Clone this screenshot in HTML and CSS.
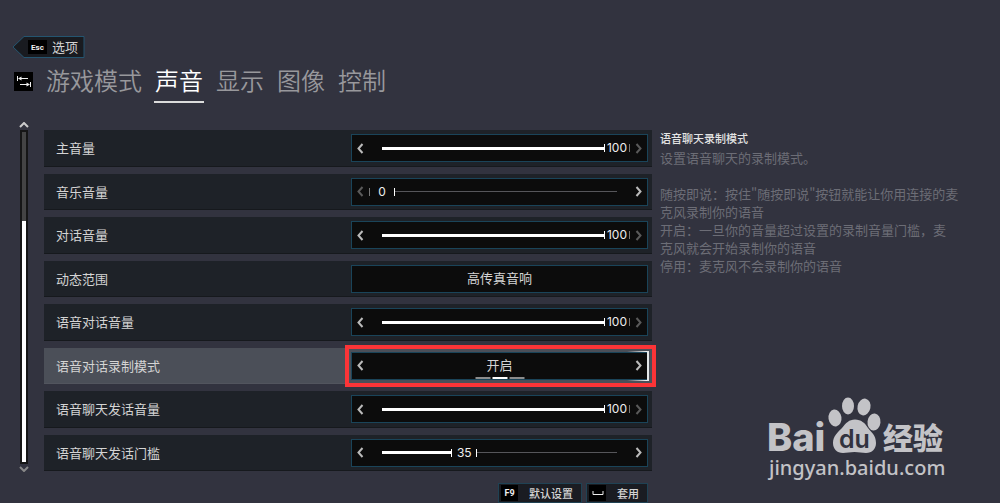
FILE: index.html
```html
<!DOCTYPE html>
<html lang="zh-CN">
<head>
    <meta charset="UTF-8">
    <meta name="viewport" content="width=device-width, initial-scale=1.0">
    <title>选项 - 声音</title>
    <link rel="stylesheet" href="styles.css">
</head>
<body>
    <header>
        <button class="back">
            <svg class="back-shape" width="73" height="24" viewBox="0 0 73 24">
                <path d="M1 12 L12 1.500 H72 V22.500 H12 Z"></path>
            </svg>
            <kbd>Esc</kbd>
            <span>选项</span>
        </button>
        <nav class="tabs">
            <svg class="tab-key" width="19" height="19" viewBox="0 0 19 19">
                <rect width="19" height="19" fill="#000"></rect>
                <path d="M3.500 4v5M5 6.500h9M16.500 10v5M6 12.500h9" fill="none" stroke="#f0f0f0"></path>
                <path d="M4 6.500l3.500-2v4zM16 12.500l-3.500-2v4z" fill="#f0f0f0"></path>
            </svg>
            <a href="#game">游戏模式</a>
            <a href="#sound" class="active">声音</a>
            <a href="#display">显示</a>
            <a href="#graphics">图像</a>
            <a href="#controls">控制</a>
        </nav>
    </header>

    <main>
        <div class="scrollbar">
            <svg class="scroll-up" width="10" height="6" viewBox="0 0 10 6"><path d="M1 5l4-4 4 4"></path></svg>
            <div class="scroll-track"><div class="scroll-thumb"></div></div>
            <svg class="scroll-down" width="10" height="6" viewBox="0 0 10 6"><path d="M1 1l4 4 4-4"></path></svg>
        </div>

        <div class="settings">
            <div class="row">
                <label for="master">主音量</label>
                <div class="control">
                    <button class="arrow" aria-label="减少"><svg width="7" height="11" viewBox="0 0 7 11"><path d="M5.500 1L1.500 5.500l4 4.500"></path></svg></button>
                    <div class="slider max">
                        <div class="fill" style="flex-grow: 100"></div>
                        <output for="master">100</output>
                        <div class="rest" style="flex-grow: 0"></div>
                        <input type="range" id="master" min="0" max="100" value="100">
                    </div>
                    <button class="arrow" aria-label="增加" disabled><svg width="7" height="11" viewBox="0 0 7 11"><path d="M1.500 1l4 4.500-4 4.500"></path></svg></button>
                </div>
            </div>
            <div class="row">
                <label for="music">音乐音量</label>
                <div class="control">
                    <button class="arrow" aria-label="减少" disabled><svg width="7" height="11" viewBox="0 0 7 11"><path d="M5.500 1L1.500 5.500l4 4.500"></path></svg></button>
                    <div class="slider min">
                        <div class="fill" style="flex-grow: 0"></div>
                        <output for="music">0</output>
                        <div class="rest" style="flex-grow: 100"></div>
                        <input type="range" id="music" min="0" max="100" value="0">
                    </div>
                    <button class="arrow" aria-label="增加"><svg width="7" height="11" viewBox="0 0 7 11"><path d="M1.500 1l4 4.500-4 4.500"></path></svg></button>
                </div>
            </div>
            <div class="row">
                <label for="dialogue">对话音量</label>
                <div class="control">
                    <button class="arrow" aria-label="减少"><svg width="7" height="11" viewBox="0 0 7 11"><path d="M5.500 1L1.500 5.500l4 4.500"></path></svg></button>
                    <div class="slider max">
                        <div class="fill" style="flex-grow: 100"></div>
                        <output for="dialogue">100</output>
                        <div class="rest" style="flex-grow: 0"></div>
                        <input type="range" id="dialogue" min="0" max="100" value="100">
                    </div>
                    <button class="arrow" aria-label="增加" disabled><svg width="7" height="11" viewBox="0 0 7 11"><path d="M1.500 1l4 4.500-4 4.500"></path></svg></button>
                </div>
            </div>
            <div class="row">
                <label for="range">动态范围</label>
                <button class="control value" id="range">高传真音响</button>
            </div>
            <div class="row">
                <label for="voice">语音对话音量</label>
                <div class="control">
                    <button class="arrow" aria-label="减少"><svg width="7" height="11" viewBox="0 0 7 11"><path d="M5.500 1L1.500 5.500l4 4.500"></path></svg></button>
                    <div class="slider max">
                        <div class="fill" style="flex-grow: 100"></div>
                        <output for="voice">100</output>
                        <div class="rest" style="flex-grow: 0"></div>
                        <input type="range" id="voice" min="0" max="100" value="100">
                    </div>
                    <button class="arrow" aria-label="增加" disabled><svg width="7" height="11" viewBox="0 0 7 11"><path d="M1.500 1l4 4.500-4 4.500"></path></svg></button>
                </div>
            </div>
            <div class="row selected">
                <label for="record">语音对话录制模式</label>
                <div class="control">
                    <button class="arrow" aria-label="上一个"><svg width="7" height="11" viewBox="0 0 7 11"><path d="M5.500 1L1.500 5.500l4 4.500"></path></svg></button>
                    <output class="value" id="record">开启</output>
                    <button class="arrow" aria-label="下一个"><svg width="7" height="11" viewBox="0 0 7 11"><path d="M1.500 1l4 4.500-4 4.500"></path></svg></button>
                    <div class="steps"><i></i><i class="on"></i><i></i></div>
                    <div class="bracket"></div>
                    <div class="marker"></div>
                </div>
            </div>
            <div class="row">
                <label for="mic">语音聊天发话音量</label>
                <div class="control">
                    <button class="arrow" aria-label="减少"><svg width="7" height="11" viewBox="0 0 7 11"><path d="M5.500 1L1.500 5.500l4 4.500"></path></svg></button>
                    <div class="slider max">
                        <div class="fill" style="flex-grow: 100"></div>
                        <output for="mic">100</output>
                        <div class="rest" style="flex-grow: 0"></div>
                        <input type="range" id="mic" min="0" max="100" value="100">
                    </div>
                    <button class="arrow" aria-label="增加" disabled><svg width="7" height="11" viewBox="0 0 7 11"><path d="M1.500 1l4 4.500-4 4.500"></path></svg></button>
                </div>
            </div>
            <div class="row">
                <label for="threshold">语音聊天发话门槛</label>
                <div class="control">
                    <button class="arrow" aria-label="减少"><svg width="7" height="11" viewBox="0 0 7 11"><path d="M5.500 1L1.500 5.500l4 4.500"></path></svg></button>
                    <div class="slider">
                        <div class="fill" style="flex-grow: 35"></div>
                        <output for="threshold">35</output>
                        <div class="rest" style="flex-grow: 65"></div>
                        <input type="range" id="threshold" min="0" max="100" value="35">
                    </div>
                    <button class="arrow" aria-label="增加"><svg width="7" height="11" viewBox="0 0 7 11"><path d="M1.500 1l4 4.500-4 4.500"></path></svg></button>
                </div>
            </div>
        </div>

        <aside>
            <h2>语音聊天录制模式</h2>
            <p>设置语音聊天的录制模式。</p>
            <p>随按即说：按住"随按即说"按钮就能让你用连接的麦<br>克风录制你的语音<br>开启：一旦你的音量超过设置的录制音量门槛，麦<br>克风就会开始录制你的语音<br>停用：麦克风不会录制你的语音</p>
        </aside>
    </main>

    <footer>
        <button><kbd>F9</kbd><span>默认设置</span></button>
        <button><kbd><svg width="12" height="5" viewBox="0 0 12 5"><path d="M1 0v3.500h10V0"></path></svg></kbd><span>套用</span></button>
    </footer>

    <svg class="watermark" width="190" height="90" viewBox="0 0 190 90">
        <text class="brand" x="5" y="53">Bai</text>
        <ellipse cx="73" cy="20" rx="6.500" ry="8.500" transform="rotate(-8 73 20)"></ellipse>
        <ellipse cx="86" cy="8" rx="6" ry="8.500"></ellipse>
        <ellipse cx="102" cy="9" rx="6.500" ry="8.500" transform="rotate(12 102 9)"></ellipse>
        <ellipse cx="112" cy="24" rx="6.500" ry="8.500" transform="rotate(6 112 24)"></ellipse>
        <path d="M93 21.500C99 21.500 103 25 106 30C109 34 114 37 114 45C114 51 110 55 104 55C100 55 97 54 92.500 54C88 54 85 55 81 55C75 55 71 51 71 45C71 38 76 34 80 30C84 25 87 21.500 93 21.500Z"></path>
        <text class="du" x="77" y="50">du</text>
        <text class="cn" x="121" y="51">经验</text>
        <text class="site" x="7" y="77">jingyan.baidu.com</text>
    </svg>
</body>
</html>
```

FILE: styles.css
```css
* {
    box-sizing: border-box;
}
body {
    display: flex;
    flex-direction: column;
    position: relative;
    min-height: 100vh;
    margin: 0;
    padding: 35px 0 0 12px;
    background-color: #32333f;
    color: #d4d4d4;
    font-family: "Noto Sans CJK SC", sans-serif;
    font-size: 13px;
}
button {
    margin: 0;
    padding: 0;
    border: none;
    background: none;
    color: inherit;
    font: inherit;
    cursor: pointer;
}
kbd {
    display: flex;
    align-items: center;
    justify-content: center;
    background-color: #000;
    color: #eee;
    font-family: Roboto, sans-serif;
    font-weight: bold;
}

/* header */
.back {
    display: flex;
    align-items: center;
    position: relative;
    gap: 5px;
    width: 73px;
    height: 24px;
    padding-left: 16px;
}
.back-shape {
    position: absolute;
    left: 0;
    top: 0;
    fill: #191b20;
    stroke: #245570;
}
.back kbd {
    position: relative;
    width: 19px;
    height: 14px;
    font-size: 8px;
}
.back span {
    position: relative;
    line-height: 20px;
}
.tabs {
    display: flex;
    gap: 11px;
    margin-left: 2px;
}
.tab-key {
    margin: 13px 1px 0 0;
}
.tabs a {
    height: 44px;
    padding: 0 1px;
    border-bottom: 2px solid transparent;
    color: #98989c;
    font-size: 24px;
    font-weight: 350;
    line-height: 42px;
    text-decoration: none;
}
.tabs a.active {
    border-color: #dcdcdc;
    color: #fff;
}

/* settings list */
main {
    display: flex;
    flex: 1;
    margin-top: 27px;
    padding-left: 8px;
}
.scrollbar {
    display: flex;
    position: relative;
    width: 8px;
    margin: 0 16px 7px 0;
    padding: 2px;
    background-color: #161616;
}
.scrollbar svg {
    position: absolute;
    left: -1px;
    fill: none;
    stroke: #ccc;
    stroke-width: 2;
}
.scroll-up {
    top: -8px;
}
.scrollbar .scroll-down {
    bottom: -8px;
    stroke: #888;
}
.scroll-track {
    display: flex;
    flex: 1;
    align-items: flex-end;
    background-color: #444;
}
.scroll-thumb {
    width: 100%;
    height: 73%;
    background-color: #fff;
}
.settings {
    display: grid;
    flex: 1;
    grid-auto-rows: 1fr;
    gap: 7px;
}
.row {
    display: flex;
    align-items: center;
    padding: 4px 4px 3px 12px;
    border-bottom: 1px solid #16191d;
    background-color: #1e2228;
}
.row label {
    flex: 1;
    line-height: 20px;
}
.row.selected {
    border-color: #52555e;
    background-color: #4b4f58;
}
.control {
    display: flex;
    align-items: center;
    position: relative;
    width: 297px;
    height: 28px;
    border: 1px solid #1a4459;
    background-color: #0c0c0c;
}
.value {
    flex: 1;
    padding-bottom: 2px;
    text-align: center;
}
button.value {
    display: block;
    flex: none;
}
.arrow {
    display: flex;
    align-items: center;
    justify-content: center;
    width: 17px;
    height: 26px;
}
.arrow svg {
    fill: none;
    stroke: #bbb;
    stroke-width: 2;
}
.arrow:disabled svg {
    stroke: #5a5a5a;
}

/* slider: the number sits between two ticks and the line stops around it */
.slider {
    display: flex;
    flex: 1;
    align-items: center;
    position: relative;
    height: 26px;
}
.fill,
.rest {
    flex-basis: 0;
    position: relative;
    height: 3px;
}
.fill::before,
.rest::before {
    content: "";
    position: absolute;
    top: 0;
    left: 13px;
    right: 0;
    height: 3px;
    background-color: #fff;
}
.rest::before {
    top: 1px;
    left: 0;
    right: 13px;
    height: 1px;
    background-color: #56565a;
}
.slider output {
    width: 26px;
    height: 8px;
    border: solid #fff;
    border-width: 0 1px;
    color: #eee;
    font-family: Inter, sans-serif;
    font-size: 12px;
    line-height: 8px;
    text-align: center;
}
.slider.max output {
    border-right-color: #777;
}
.slider.min output {
    border-left-color: #777;
}
.slider input {
    position: absolute;
    inset: 0;
    width: 100%;
    height: 100%;
    margin: 0;
    opacity: 0;
    cursor: pointer;
}

/* selected row */
.steps {
    display: flex;
    gap: 2px;
    position: absolute;
    bottom: 0;
    left: 50%;
    transform: translateX(-50%);
}
.steps i {
    width: 15px;
    height: 2px;
    background-color: #8c8c8c;
}
.steps .on {
    background-color: #fff;
}
.bracket {
    position: absolute;
    top: -2px;
    bottom: -2px;
    right: -2px;
    width: 22px;
    border-right: 2px solid #e4e8ea;
    background:
        linear-gradient(to right, transparent, #f4f4f4) top / 100% 1px no-repeat,
        linear-gradient(to right, transparent, #f4f4f4) bottom / 100% 1px no-repeat;
    pointer-events: none;
}
.marker {
    position: absolute;
    inset: -8px -9px -8px -7px;
    border: 4px solid #fb3437;
    pointer-events: none;
}

/* description */
aside {
    width: 340px;
    margin-left: 8px;
    color: #6c6d76;
    line-height: 18px;
}
h2 {
    margin: 0 0 2px;
    color: #e4e4e4;
    font-size: 11px;
    font-weight: 500;
    line-height: 17px;
}
p {
    margin: 0 0 18px;
}

/* footer */
footer {
    display: flex;
    justify-content: flex-end;
    gap: 4px;
    margin-top: 12px;
    padding-right: 352px;
}
footer button {
    display: flex;
    align-items: center;
    gap: 11px;
    height: 20px;
    padding: 0 8px 0 2px;
    border: 1px solid #1f4254;
    background-color: #1a1c22;
    font-size: 11px;
    font-weight: 500;
    line-height: 16px;
}
footer kbd {
    width: 17px;
    height: 16px;
    font-size: 9px;
}
footer kbd svg {
    fill: none;
    stroke: #eee;
}

/* watermark */
.watermark {
    position: absolute;
    right: 48px;
    bottom: 15px;
    fill: #c3c3c7;
    overflow: visible;
    pointer-events: none;
}
.brand {
    font: 800 38px Inter, sans-serif;
}
.du {
    fill: #32333f;
    font: 600 25px Inter, sans-serif;
}
.cn {
    font: 900 30px "Noto Sans CJK SC", sans-serif;
}
.site {
    font: 500 20px "Noto Sans", sans-serif;
}
```
